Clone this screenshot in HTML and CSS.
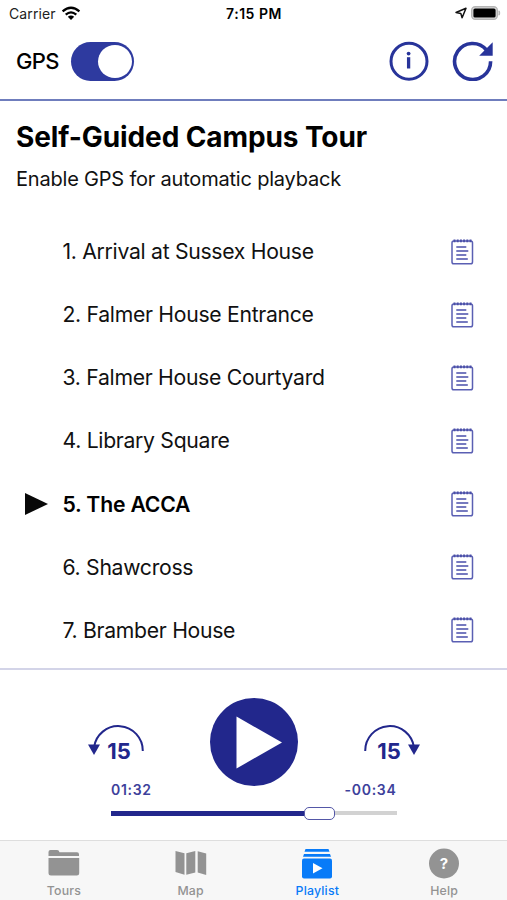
FILE: index.html
```html
<!DOCTYPE html>
<html lang="en">
<head>
<meta charset="utf-8">
<title>Self-Guided Campus Tour</title>
<link rel="stylesheet" href="styles.css">
</head>
<body>
<svg class="symbols" width="0" height="0" aria-hidden="true">
  <symbol id="notes" viewBox="0 0 24 28">
    <rect x="2" y="3" width="20.500" height="22.700" rx="1.800" fill="none" stroke="#5a5fb3" stroke-width="1.500"/>
    <path d="M3.500 2.800h18" stroke="#4a4fa8" stroke-width="2.800" stroke-dasharray="2 1.200"/>
    <path d="M6.300 9h10M6.300 13h12M6.300 17h10M6.300 21h11.500" stroke="#4a4fab" stroke-width="1.400"/>
  </symbol>
</svg>
<div class="app">
  <header class="status">
    <div class="carrier"><span>Carrier</span>
      <svg width="20" height="15" viewBox="0 0 20 15"><g fill="none" stroke="#000" stroke-width="2.300"><path d="M1.600 5.300Q10-1.700 18.400 5.300M4.700 8.600Q10 4.200 15.300 8.600"/></g><path d="M6.800 10.800Q10 8.200 13.200 10.800L10 14z"/></svg>
    </div>
    <span class="clock">7:15 PM</span>
    <div class="power">
      <svg width="12" height="12" viewBox="0 0 12 12"><path d="M1 5.500L11 1.200 7.100 10.700 5.800 6.400z" fill="none" stroke="#111" stroke-width="1.500" stroke-linejoin="round"/></svg>
      <svg width="30" height="14" viewBox="0 0 30 14"><rect x=".7" y=".7" width="25.600" height="12.600" rx="3.500" fill="#ddd" stroke="#b5b5b5" stroke-width="1.400"/><rect x="2.400" y="2.400" width="22.200" height="9.200" rx="1.600"/><path d="M28 4.800q1.600 2.200 0 4.400z" fill="#b5b5b5" stroke="#b5b5b5"/></svg>
    </div>
  </header>
  <div class="toolbar">
    <span class="gps">GPS</span>
    <span class="switch"><span class="knob"></span></span>
    <svg class="info" width="40" height="40" viewBox="0 0 40 40"><circle cx="20" cy="20.300" r="18" fill="none" stroke="#28349a" stroke-width="3"/><circle cx="19.600" cy="12.600" r="1.900" fill="#28349a"/><path d="M19.600 16.200v11.300" stroke="#28349a" stroke-width="3.300"/></svg>
    <svg class="reload" width="42" height="40" viewBox="0 0 42 40"><path d="M38.600 20.300A18 18 0 1 1 34.500 9" fill="none" stroke="#28349a" stroke-width="3.600"/><path d="M40.700 1.200v13.600H27.200z" fill="#28349a"/></svg>
  </div>
  <main class="content">
    <h1>Self-Guided Campus Tour</h1>
    <p class="hint">Enable GPS for automatic playback</p>
    <ul class="stops">
      <li><span class="mark"></span><span>1. Arrival at Sussex House</span><svg class="note"><use href="#notes"/></svg></li>
      <li><span class="mark"></span><span>2. Falmer House Entrance</span><svg class="note"><use href="#notes"/></svg></li>
      <li><span class="mark"></span><span>3. Falmer House Courtyard</span><svg class="note"><use href="#notes"/></svg></li>
      <li><span class="mark"></span><span>4. Library Square</span><svg class="note"><use href="#notes"/></svg></li>
      <li class="current"><span class="mark"><svg width="23" height="22" viewBox="0 0 23 22"><path d="M0 0l23 11L0 22z" fill="#080808"/></svg></span><span>5. The ACCA</span><svg class="note"><use href="#notes"/></svg></li>
      <li><span class="mark"></span><span>6. Shawcross</span><svg class="note"><use href="#notes"/></svg></li>
      <li><span class="mark"></span><span>7. Bramber House</span><svg class="note"><use href="#notes"/></svg></li>
    </ul>
  </main>
  <section class="player">
    <div class="controls">
      <div class="skip"><svg width="58" height="34" viewBox="0 0 58 34"><path d="M6 23.500A24.500 24.500 0 0 1 54.800 27" fill="none" stroke="#22278c" stroke-width="2"/><path d="M0 20.500h12L6 31z" fill="#22278c"/></svg><span class="amount back">15</span></div>
      <svg class="play" width="88" height="88" viewBox="0 0 88 88"><circle cx="44" cy="44" r="44" fill="#22278c"/><path d="M26.500 18.500v52L72 44.500z" fill="#fff"/></svg>
      <div class="skip"><svg width="58" height="34" viewBox="0 0 58 34"><path d="M52 23.500A24.500 24.500 0 0 0 3.200 27" fill="none" stroke="#22278c" stroke-width="2"/><path d="M58 20.500H46L52 31z" fill="#22278c"/></svg><span class="amount forward">15</span></div>
    </div>
    <div class="times"><span>01:32</span><span>-00:34</span></div>
    <div class="track"><span class="played"></span><span class="thumb"></span><span class="rest"></span></div>
  </section>
  <nav class="tabs">
    <a><svg width="32" height="32" viewBox="0 0 32 32"><path d="M.5 9V5Q.5 3 2.500 3H9q2 0 2.500 2.200H29q2 0 2 2V9z"/><path d="M.5 11h30.700v15q0 2.500-2.500 2.500H3Q.5 28.500 .5 26z"/></svg><span>Tours</span></a>
    <a><svg width="32" height="32" viewBox="0 0 32 32"><path d="M.5 4l9 2.200V27.700L.5 25zM11.300 6.200l9-2.200v21.500l-9 2.200zM22.700 4.200l8.500 2.300v21.500l-8.500-2.600z"/></svg><span>Map</span></a>
    <a class="active"><svg width="32" height="32" viewBox="0 0 32 32"><path d="M4.500 2h23l1 2.800h-25zM3 7h26l1 2.700H2z"/><rect x="1" y="11.500" width="30" height="20" rx="2"/><path d="M12 16v10.500l9.500-5.200z" fill="#fff"/></svg><span>Playlist</span></a>
    <a><svg width="32" height="32" viewBox="0 0 32 32"><circle cx="16" cy="16.500" r="15"/><text class="question" x="16" y="22" text-anchor="middle">?</text></svg><span>Help</span></a>
  </nav>
</div>
</body>
</html>
```
FILE: styles.css
```css
* { box-sizing: border-box; }
body { margin: 0; background: #fff; color: #000; font-family: Inter, "Liberation Sans", sans-serif; }
svg { display: block; flex: none; }
.symbols { position: absolute; }
.app { width: 507px; height: 900px; display: flex; flex-direction: column; overflow: hidden; }
.status { height: 28px; display: grid; grid-template-columns: 1fr auto 1fr; align-items: center; padding: 0 7px 2px 9px; font-size: 14px; }
.carrier { display: flex; align-items: center; gap: 5px; color: #222; letter-spacing: .1px; }
.clock { font-weight: 600; letter-spacing: .5px; margin-right: 1px; }
.power { display: flex; justify-content: flex-end; align-items: center; gap: 4px; margin-right: -1px; }
.toolbar { height: 73px; display: flex; align-items: center; padding: 0 13px 5px 16px; border-bottom: 2px solid #6f7dbd; }
.gps { font-size: 22px; font-weight: 500; letter-spacing: -.6px; width: 55px; }
.switch { width: 63px; height: 39px; border-radius: 20px; background: #2e3a9f; padding: 3px 2px; display: flex; justify-content: flex-end; }
.knob { width: 34px; height: 33px; border-radius: 50%; background: #fff; }
.info { margin-left: auto; margin-right: 23px; }
.content { height: 567px; flex: none; padding: 19px 0 0 16px; }
h1 { margin: 0; font-size: 28px; line-height: 34px; font-weight: 700; letter-spacing: -.1px; white-space: nowrap; }
.hint { margin: 11px 0 0; font-size: 20px; line-height: 28px; letter-spacing: -.2px; color: #111; }
.stops { margin: 27px 0 0; padding: 0; list-style: none; }
.stops li { height: 63.150px; display: flex; align-items: center; padding: 0 33px 0 9px; font-size: 21.200px; letter-spacing: -.3px; color: #111; }
.stops span { line-height: 26px; margin-top: -1px; }
.stops .mark { width: 37.500px; flex: none; margin-top: 0; line-height: 0; }
.note { width: 24px; height: 28px; margin-left: auto; }
.stops .current { font-weight: 600; letter-spacing: -.2px; color: #000; }
.player { height: 172px; flex: none; border-top: 2px solid #d3d4e8; padding-top: 28px; color: #22278c; }
.controls { height: 88px; display: flex; justify-content: space-between; padding: 0 87px 0 88px; }
.skip { display: flex; flex-direction: column; width: 58px; padding-top: 25.500px; }
.skip svg { overflow: visible; }
.amount { font-size: 22px; font-weight: 700; line-height: 24px; margin-top: -19px; text-align: center; }
.back { padding-left: 4px; }
.forward { padding-right: 4px; }
.times { display: flex; justify-content: space-between; margin: -5px 110.500px 0 111px; font-size: 14px; line-height: 18px; font-weight: 600; letter-spacing: .7px; color: #3d419b; }
.track { display: flex; align-items: center; height: 14px; margin: 7px 110px 0 111px; }
.played { width: 193px; height: 5px; background: #22278c; }
.thumb { width: 31px; height: 13px; border: 1.500px solid #5457a7; border-radius: 5px; background: #fff; }
.rest { flex: 1; height: 4px; background: #d2d2d2; }
.tabs { height: 60px; flex: none; border-top: 1px solid #dedede; background: #f7f7f7; display: grid; grid-template-columns: repeat(4, 1fr); color: #939393; }
.tabs a { display: flex; flex-direction: column; align-items: center; padding: 6px 0 0 1px; font-size: 12.300px; line-height: 16px; font-weight: 500; gap: 4px; letter-spacing: .2px; }
.tabs svg { fill: currentColor; }
.tabs .active { color: #087bf8; }
.question { font-size: 15px; font-weight: 700; fill: #fff; }
```
